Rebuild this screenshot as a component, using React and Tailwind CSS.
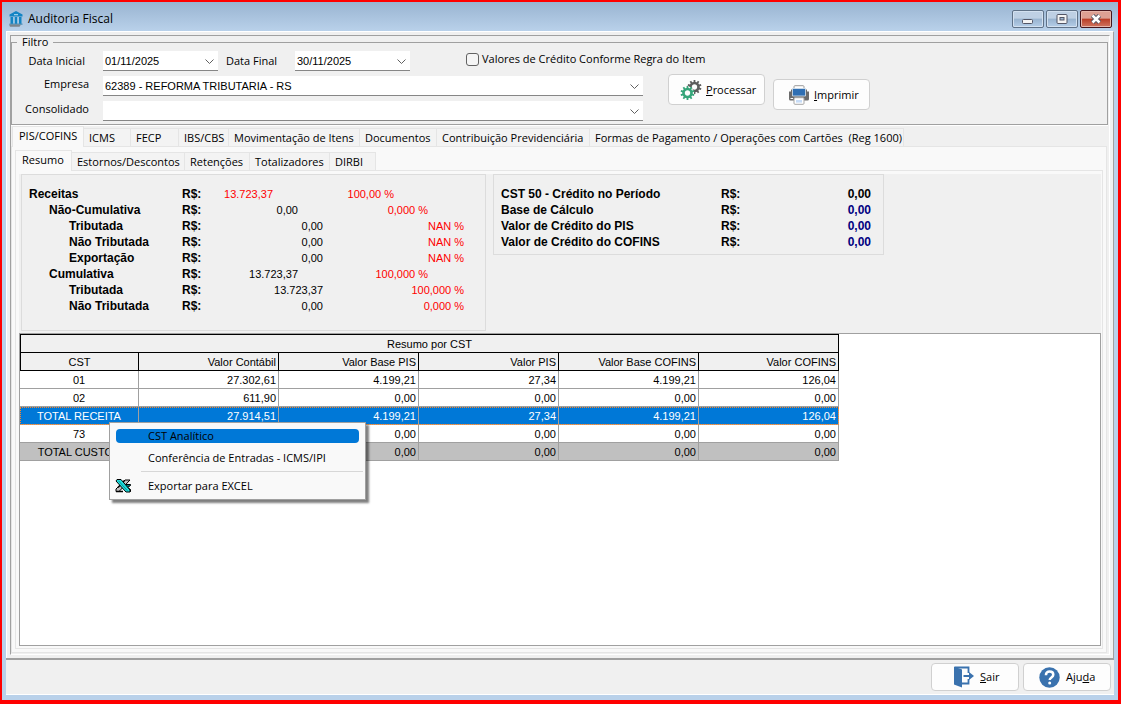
import clsx from 'clsx';

const MAIN_TABS = [
    { label: 'PIS/COFINS', width: 'w-[72px]', active: true },
    { label: 'ICMS', width: 'w-[47px]' },
    { label: 'FECP', width: 'w-[48px]' },
    { label: 'IBS/CBS', width: 'w-[50px]' },
    { label: 'Movimentação de Itens', width: 'w-[131px]' },
    { label: 'Documentos', width: 'w-[77px]' },
    { label: 'Contribuição Previdenciária', width: 'w-[153px]' },
    { label: 'Formas de Pagamento / Operações com Cartões  (Reg 1600)', width: 'w-[314px]' },
];

const SUB_TABS = [
    { label: 'Resumo', width: 'w-[57px]', active: true },
    { label: 'Estornos/Descontos', width: 'w-[113px]' },
    { label: 'Retenções', width: 'w-[65px]' },
    { label: 'Totalizadores', width: 'w-[80px]' },
    { label: 'DIRBI', width: 'w-[46px]' },
];

const RECEITAS = [
    { label: 'Receitas', level: 0, value: '13.723,37', percent: '100,00 %', red: true },
    { label: 'Não-Cumulativa', level: 1, value: '0,00', percent: '0,000 %' },
    { label: 'Tributada', level: 2, value: '0,00', percent: 'NAN %' },
    { label: 'Não Tributada', level: 2, value: '0,00', percent: 'NAN %' },
    { label: 'Exportação', level: 2, value: '0,00', percent: 'NAN %' },
    { label: 'Cumulativa', level: 1, value: '13.723,37', percent: '100,000 %' },
    { label: 'Tributada', level: 2, value: '13.723,37', percent: '100,000 %' },
    { label: 'Não Tributada', level: 2, value: '0,00', percent: '0,000 %' },
];

const LABEL_INDENT = ['pl-0', 'pl-5', 'pl-10'];
const VALUE_INDENT = ['pr-[50px]', 'pr-[25px]', 'pr-0'];
const PERCENT_INDENT = ['pr-[70px]', 'pr-[36px]', 'pr-0'];

const CREDITOS = [
    { label: 'CST 50 - Crédito no Período', value: '0,00', color: 'text-black' },
    { label: 'Base de Cálculo', value: '0,00', color: 'text-[#000080]' },
    { label: 'Valor de Crédito do PIS', value: '0,00', color: 'text-[#000080]' },
    { label: 'Valor de Crédito do COFINS', value: '0,00', color: 'text-[#000080]' },
];

const COLUMNS = ['CST', 'Valor Contábil', 'Valor Base PIS', 'Valor PIS', 'Valor Base COFINS', 'Valor COFINS'];

const ROWS = [
    { cells: ['01', '27.302,61', '4.199,21', '27,34', '4.199,21', '126,04'] },
    { cells: ['02', '611,90', '0,00', '0,00', '0,00', '0,00'] },
    {
        cells: ['TOTAL RECEITA', '27.914,51', '4.199,21', '27,34', '4.199,21', '126,04'],
        style: 'bg-[#0078d7] text-white outline outline-dotted -outline-offset-1 outline-[#ff8728]',
    },
    { cells: ['73', '0,00', '0,00', '0,00', '0,00', '0,00'] },
    { cells: ['TOTAL CUSTOS', '0,00', '0,00', '0,00', '0,00', '0,00'], style: 'bg-[#c0c0c0]' },
];

const GRID_FONT = "font-['Liberation_Sans',sans-serif] text-[11px]";

function BuildingIcon() {
    return (
        <svg viewBox="0 0 16 18" className="h-[18px] w-4 shrink-0">
            <path d="M8 1 14.500 4.500v2h-13v-2Z" fill="#1284c4" />
            <path d="M6 4.200h4v1H6z" fill="#bfe3f7" />
            <path d="M2.500 7h2.500v7H2.500zM6.800 7h2.500v7H6.800zM11 7h2.500v7H11z" fill="#1284c4" />
            <path d="M5 7h.8v7H5zM9.300 7h.8v7h-.8z" fill="#8cc7e8" />
            <path d="M1.500 13.500h13v1.300h-13z" fill="#4d8fb8" />
            <path d="M1 14.500h12l-1.500 2.300H2z" fill="#7d858c" />
        </svg>
    );
}

function Gear({ cx, cy, r, color }) {
    const teeth = [0, 36, 72, 108, 144, 180, 216, 252, 288, 324];
    return (
        <g transform={`translate(${cx} ${cy})`}>
            <circle r={r} fill="none" stroke={color} strokeWidth="2.6" />
            {teeth.map((angle) => (
                <rect key={angle} x="-0.9" y={-r - 3} width="1.8" height="2.6" fill={color} transform={`rotate(${angle})`} />
            ))}
        </g>
    );
}

function GearsIcon() {
    return (
        <svg viewBox="0 0 22 20" className="h-5 w-[22px]">
            <Gear cx={14.5} cy={7} r={4} color="#5d5d5d" />
            <circle cx="7.5" cy="13" r="6.5" fill="#fdfdfd" />
            <Gear cx={7.5} cy={13} r={4} color="#35a579" />
        </svg>
    );
}

function PrinterIcon() {
    return (
        <svg viewBox="0 0 22 20" className="h-5 w-[22px]">
            <rect x="6" y="0.7" width="10" height="5" rx="1" fill="#fff" stroke="#9a9a9a" />
            <path d="M1 6.500h20v7.500q0 1.500-1.500 1.500h-17Q1 15.500 1 14Z" fill="#6b6b6b" />
            <path d="M3 4.500h2v3H3zM17 4.500h2v3h-2z" fill="#6b6b6b" />
            <path d="M4.500 3.500h13v7.500h-13z" fill="#2f6fb3" stroke="#d8e4f0" strokeWidth="0.8" />
            <path d="M2.500 13h2.500v1H2.500z" fill="#fff" />
            <rect x="6" y="12.700" width="10" height="6.600" rx="1" fill="#fff" stroke="#a5a5a5" />
            <rect x="8" y="15" width="6" height="2.600" fill="#c7dcf7" />
        </svg>
    );
}

function DoorIcon() {
    return (
        <svg viewBox="0 0 21 22" className="h-[22px] w-[21px]">
            <path d="M2 1.500h13.500V7M15.500 13v4.500H9" fill="none" stroke="#3a72ae" strokeWidth="1.800" />
            <path d="m1 .5 8 3v18l-8-3Z" fill="#3a72ae" />
            <path d="M10.500 9H16V6l5 4-5 4v-3h-5.500Z" fill="#3a72ae" />
        </svg>
    );
}

function HelpIcon() {
    return (
        <svg viewBox="0 0 21 21" className="size-[21px]">
            <circle cx="10.500" cy="10.500" r="10.200" fill="#3a72ae" />
            <path d="M6.900 8.200c0-2.300 1.600-3.600 3.700-3.600s3.700 1.200 3.700 3.100c0 2.800-3.600 2.700-3.600 5.300" fill="none" stroke="#fff" strokeWidth="2.500" />
            <circle cx="10.700" cy="16" r="1.500" fill="#fff" />
        </svg>
    );
}

function ExcelIcon() {
    return (
        <svg viewBox="0 0 17 14" className="h-3.5 w-[17px]">
            <path d="M10 1h5L4 12.500H1V10Z" fill="#c0c0c0" stroke="#000" />
            <path d="M9.500 1.500 3 8.500M1 12.500h7" fill="none" stroke="#000" strokeWidth="1.500" />
            <path d="M10.500 5.500h5v1l-3 2 3 2v2h-4" fill="#008080" stroke="#000" />
            <path d="M2 .5h4l9 10.500v2h-4L1 2Z" fill="#20e0e0" stroke="#000" />
            <path d="m3.500 1.800 9 10" stroke="#008080" strokeWidth="0.800" />
        </svg>
    );
}

function WindowButton({ label, danger, children }) {
    return (
        <button
            type="button"
            aria-label={label}
            className={clsx(
                'flex h-[18px] w-8 items-center justify-center rounded-[2px] border inset-ring',
                danger
                    ? 'border-[#46151c] bg-linear-to-b from-[#dda093] from-45% via-[#b93c25] via-50% to-[#cf7460] inset-ring-[#e6b5aa]'
                    : 'border-[#5f7288] bg-linear-to-b from-[#bed0e4] from-45% via-[#98b3cf] via-50% to-[#b5cee8] inset-ring-[#d3e1f0]',
            )}
        >
            {children}
        </button>
    );
}

function Combo({ id, value, className }) {
    return (
        <div className={clsx('relative h-5 shrink-0', className)}>
            <select
                id={id}
                defaultValue={value}
                className={clsx(GRID_FONT, 'h-full w-full appearance-none border-b border-[#868686] bg-white pr-6 pl-[2px] text-black')}
            >
                <option>{value}</option>
            </select>
            <svg viewBox="0 0 9 5" className="pointer-events-none absolute top-2 right-1 h-[5px] w-[9px]">
                <path d="m.5.500 4 4 4-4" fill="none" stroke="#606060" />
            </svg>
        </div>
    );
}

function ActionButton({ icon, className, children }) {
    return (
        <button
            type="button"
            className={clsx('flex items-center rounded-[4px] border border-[#d0d0d0] bg-[#fdfdfd]', className)}
        >
            {icon}
            <span>{children}</span>
        </button>
    );
}

function TabStrip({ tabs, className }) {
    return (
        <div role="tablist" className={clsx('flex h-5 items-end', className)}>
            {tabs.map((tab) => (
                <button
                    key={tab.label}
                    type="button"
                    role="tab"
                    aria-selected={Boolean(tab.active)}
                    className={clsx(
                        'shrink-0 border-t border-r border-[#e5e5e5] text-left whitespace-pre',
                        tab.width,
                        tab.active ? 'relative -mb-px h-[21px] border-l bg-[#f9f9f9] pb-[2px] pl-[6px]' : 'h-[18px] bg-[#f3f3f3] pl-[5px]',
                    )}
                >
                    {tab.label}
                </button>
            ))}
        </div>
    );
}

function FilterBox() {
    return (
        <fieldset className="mr-px border border-[#a0a0a0] px-[5px] pb-[3px] shadow-[0_1px_0_#fff]">
            <legend className="h-3 px-[5px] leading-3">Filtro</legend>
            <div className="flex items-start pt-[3px]">
                <div className="grid grid-cols-[72px_540px] gap-x-[14px] gap-y-[5px]">
                    <label htmlFor="data-inicial" className="pr-1 text-right leading-5">Data Inicial</label>
                    <div className="flex">
                        <Combo id="data-inicial" value="01/11/2025" className="w-[115px]" />
                        <label htmlFor="data-final" className="w-[77px] shrink-0 pl-2 leading-5">Data Final</label>
                        <Combo id="data-final" value="30/11/2025" className="w-[115px]" />
                        <label className="ml-14 flex items-center gap-[3px] pb-1 whitespace-nowrap">
                            <input type="checkbox" className="size-[13px] appearance-none rounded-[3px] border border-[#626262] bg-[#f5f5f5]" />
                            Valores de Crédito Conforme Regra do Item
                        </label>
                    </div>
                    <label htmlFor="empresa" className="text-right">Empresa</label>
                    <Combo id="empresa" value="62389 - REFORMA TRIBUTARIA - RS" />
                    <label htmlFor="consolidado" className="text-right">Consolidado</label>
                    <Combo id="consolidado" value="" />
                </div>
                <div className="flex items-start gap-2 pt-[23px] pl-[25px]">
                    <ActionButton icon={<GearsIcon />} className="h-[31px] w-[97px] gap-1 pl-[11px]">
                        <u>P</u>rocessar
                    </ActionButton>
                    <ActionButton icon={<PrinterIcon />} className="mt-[5px] h-[31px] w-[97px] gap-1 pl-[14px]">
                        <u>I</u>mprimir
                    </ActionButton>
                </div>
            </div>
        </fieldset>
    );
}

function ReceitasPanel() {
    return (
        <section className={clsx(GRID_FONT, 'h-[157px] w-[465px] border border-[#dcdcdc] pt-[11px] pl-[7px] leading-4')}>
            {RECEITAS.map((row, i) => (
                <div key={i} className="grid grid-cols-[153px_41px_100px_141px]">
                    <span className={clsx('text-[12px] font-bold', LABEL_INDENT[row.level])}>{row.label}</span>
                    <span className="text-[12px] font-bold">R$:</span>
                    <span className={clsx('text-right', VALUE_INDENT[row.level], row.red && 'text-[#ff0000]')}>{row.value}</span>
                    <span className={clsx('text-right text-[#ff0000]', PERCENT_INDENT[row.level])}>{row.percent}</span>
                </div>
            ))}
        </section>
    );
}

function CreditoPanel() {
    return (
        <section className="h-[81px] w-[391px] border border-[#dcdcdc] pt-[11px] pl-[7px] font-['Liberation_Sans',sans-serif] text-[12px] leading-4 font-bold">
            {CREDITOS.map((row) => (
                <div key={row.label} className="grid grid-cols-[220px_50px_100px]">
                    <span>{row.label}</span>
                    <span>R$:</span>
                    <span className={clsx('text-right', row.color)}>{row.value}</span>
                </div>
            ))}
        </section>
    );
}

function ResumoTable() {
    return (
        <table className={clsx(GRID_FONT, 'w-[819px] table-fixed border-separate border-spacing-0 leading-4')}>
            <colgroup>
                <col className="w-[119px]" />
                <col span={5} />
            </colgroup>
            <thead className="bg-[#f0f0f0]">
                <tr>
                    <th colSpan={6} className="h-[19px] border border-black p-0 font-normal">Resumo por CST</th>
                </tr>
                <tr>
                    {COLUMNS.map((name, i) => (
                        <th
                            key={name}
                            className={clsx('h-[18px] border-r border-b border-black p-0 font-normal', i === 0 ? 'border-l text-center' : 'pr-[2px] text-right')}
                        >
                            {name}
                        </th>
                    ))}
                </tr>
            </thead>
            <tbody>
                {ROWS.map((row) => (
                    <tr key={row.cells[0]} className={row.style}>
                        {row.cells.map((cell, i) => (
                            <td
                                key={i}
                                className={clsx('h-[18px] border-r border-b border-[#a0a0a0] p-0', i === 0 ? 'text-center' : 'pr-[2px] text-right')}
                            >
                                {cell}
                            </td>
                        ))}
                    </tr>
                ))}
            </tbody>
        </table>
    );
}

function ContextMenu() {
    return (
        <div role="menu" className="absolute top-[88px] left-[89px] flex h-[78px] w-[257px] flex-col border border-[#a0a0a0] bg-[#f9f9f9] shadow-[3px_3px_2px_rgba(0,0,0,0.5)]">
            <button type="button" role="menuitem" className="mx-[6px] mt-[6px] h-[14px] shrink-0 rounded-[4px] bg-[#0078d7] pl-8 text-left leading-[14px]">
                CST Analítico
            </button>
            <button type="button" role="menuitem" className="mx-[6px] mt-1 h-[22px] shrink-0 pl-8 text-left">
                Conferência de Entradas - ICMS/IPI
            </button>
            <hr className="mt-[2px] mr-[2px] ml-[31px] border-[#d7d7d7]" />
            <button type="button" role="menuitem" className="mt-[3px] flex h-[22px] shrink-0 items-center gap-4 pl-[5px] text-left">
                <ExcelIcon />
                Exportar para EXCEL
            </button>
        </div>
    );
}

export default function App() {
    return (
        <div className="flex min-h-screen flex-col border-t-2 border-r-[3px] border-b-4 border-l-2 border-[#ff0000] bg-[#b9d1ea] font-['Open_Sans',sans-serif] text-[11px] leading-4 text-black">
            <header className="flex h-[29px] items-start justify-between bg-linear-to-b from-[#99b4d1] to-[#b9d1ea] pt-2 pr-[6px] pl-[6px]">
                <div className="flex items-center gap-1">
                    <BuildingIcon />
                    <h1 className="text-[12px]">Auditoria Fiscal</h1>
                </div>
                <div className="flex gap-[2px]">
                    <WindowButton label="Minimizar">
                        <svg viewBox="0 0 12 10" className="h-2.5 w-3">
                            <rect x="0.5" y="5.500" width="10" height="4" rx="1" fill="#f4f4f4" stroke="#535666" />
                        </svg>
                    </WindowButton>
                    <WindowButton label="Maximizar">
                        <svg viewBox="0 0 12 10" className="h-2.5 w-3">
                            <rect x="1" y="0.5" width="10" height="9" rx="1" fill="#f4f4f4" stroke="#535666" />
                            <rect x="4" y="3.500" width="4" height="2.500" fill="#9fb8d2" stroke="#535666" />
                        </svg>
                    </WindowButton>
                    <WindowButton label="Fechar" danger>
                        <svg viewBox="0 0 12 10" className="h-2.5 w-3">
                            <path d="m2.500 1.500 7 7m0-7-7 7" stroke="#535666" strokeWidth="4.500" />
                            <path d="m2.500 1.500 7 7m0-7-7 7" stroke="#fff" strokeWidth="2.500" />
                        </svg>
                    </WindowButton>
                </div>
            </header>

            <main className="mr-1 mb-[5px] ml-1 flex flex-1 flex-col bg-[#f0f0f0]">
                <div className="flex flex-1 flex-col border-t border-r border-l border-t-white border-r-[#a0a0a0] border-l-white p-[3px]">
                    <div className="flex flex-1 flex-col border border-t-[#a0a0a0] border-r-white border-b-white border-l-[#a0a0a0]">
                        <FilterBox />

                        <div className="mr-[2px] mb-px flex flex-1 flex-col pt-px">
                            <TabStrip tabs={MAIN_TABS} className="pl-px" />
                            <div className="flex flex-1 flex-col border border-[#e5e5e5] bg-[#f9f9f9] p-[3px]">
                                <TabStrip tabs={SUB_TABS} />
                                <div className="flex flex-1 flex-col border border-[#e5e5e5] pt-[3px] pr-px pb-[2px] pl-[3px]">
                                    <div className="flex flex-1 flex-col gap-[2px] bg-[#f0f0f0]">
                                        <div className="flex gap-[7px] pl-[2px]">
                                            <ReceitasPanel />
                                            <CreditoPanel />
                                        </div>
                                        <div className="relative flex-1 border border-[#a0a0a0] bg-white">
                                            <ResumoTable />
                                            <ContextMenu />
                                        </div>
                                    </div>
                                </div>
                            </div>
                        </div>
                    </div>
                </div>

                <footer className="flex justify-end gap-1 border-t-2 border-b border-t-[#a0a0a0] border-b-white pt-[3px] pr-[3px] pb-[3px]">
                    <ActionButton icon={<DoorIcon />} className="h-7 w-[88px] gap-[6px] pl-[21px]">
                        <u>S</u>air
                    </ActionButton>
                    <ActionButton icon={<HelpIcon />} className="h-7 w-[88px] gap-[6px] pl-[15px]">
                        Aju<u>d</u>a
                    </ActionButton>
                </footer>
            </main>
        </div>
    );
}
